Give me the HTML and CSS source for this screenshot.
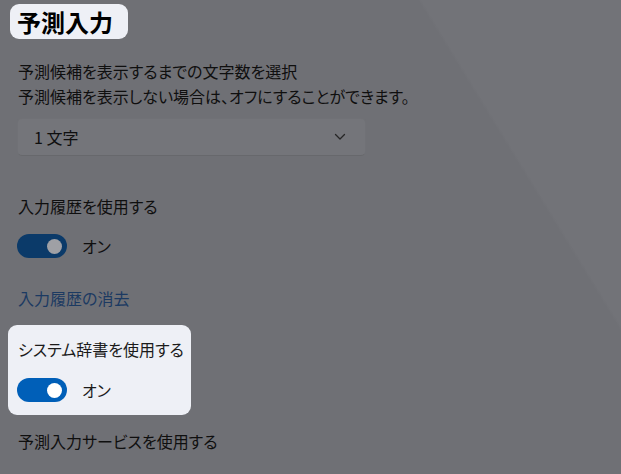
FILE: index.html
```html
<!DOCTYPE html>
<html lang="ja">
<head>
<meta charset="utf-8">
<title>予測入力</title>
<link rel="stylesheet" href="styles.css">
</head>
<body>
<main class="page">
  <h1 class="title">予測入力</h1>
  <p class="desc">予測候補を表示するまでの文字数を選択<br>予測候補を表示しない場合は、オフにすることができます。</p>
  <div class="select">
    <span class="select-text">1 文字</span>
    <svg class="chevron" width="12" height="8" viewBox="0 0 12 8"><polyline points="1.5,1.5 6,6 10.5,1.5" fill="none" stroke="#262626" stroke-width="1.3" stroke-linecap="round" stroke-linejoin="round"/></svg>
  </div>
  <p class="label label-history">入力履歴を使用する</p>
  <div class="toggle-row">
    <span class="toggle toggle-dim"><span class="knob"></span></span>
    <span class="state">オン</span>
  </div>
  <p class="link">入力履歴の消去</p>
  <section class="spot">
    <p class="label">システム辞書を使用する</p>
    <div class="toggle-row toggle-row-spot">
      <span class="toggle toggle-on"><span class="knob"></span></span>
      <span class="state">オン</span>
    </div>
  </section>
  <p class="label label-last">予測入力サービスを使用する</p>
</main>
</body>
</html>
```

FILE: styles.css
```css
html, body {
  margin: 0;
  padding: 0;
}
body {
  width: 621px;
  height: 474px;
  overflow: hidden;
  background: linear-gradient(58.5deg, #6f7075 0, #6f7075 604px, #727378 607px, #727378 100%);
  font-family: "Noto Sans CJK JP", "Noto Sans", sans-serif;
  font-feature-settings: "palt";
  color: #0f0f0f;
}
.page {
  padding: 4px 0 0 18px;
  display: flex;
  flex-direction: column;
  align-items: flex-start;
}
.title {
  margin: 0 0 0 -8px;
  padding: 0 15px 0 7px;
  height: 35px;
  line-height: 35px;
  font-size: 24px;
  font-weight: 700;
  color: #000;
  background: #eef0f6;
  border-radius: 9px;
}
.desc {
  margin: 20px 0 0;
  font-size: 16px;
  line-height: 25px;
}
.select {
  margin-top: 9px;
  margin-left: -1px;
  box-sizing: border-box;
  width: 349px;
  height: 38px;
  display: flex;
  align-items: center;
  justify-content: space-between;
  padding: 0 19px 0 16px;
  background: #74757a;
  border: 1px solid #707176;
  border-bottom-color: #67686c;
  border-radius: 5px;
}
.select-text {
  font-size: 16px;
  line-height: 24px;
}
.chevron {
  display: block;
}
.label {
  margin: 0;
  font-size: 16px;
  line-height: 24px;
}
.label-history {
  margin-top: 38px;
}
.toggle-row {
  margin-top: 16px;
  margin-left: -1px;
  height: 24px;
  display: flex;
  align-items: center;
  gap: 15px;
}
.toggle {
  box-sizing: border-box;
  width: 50px;
  height: 24px;
  border-radius: 12px;
  display: flex;
  align-items: center;
  justify-content: flex-end;
  padding-right: 5px;
}
.toggle-dim {
  background: #0b3a69;
}
.toggle-on {
  background: #005fb8;
}
.knob {
  width: 15px;
  height: 15px;
  border-radius: 50%;
}
.toggle-dim .knob {
  background: #9fa0a5;
}
.toggle-on .knob {
  background: #ffffff;
}
.state {
  font-size: 16px;
  line-height: 24px;
}
.link {
  margin: 28px 0 0;
  font-size: 16px;
  line-height: 24px;
  color: #1c3a62;
}
.spot {
  margin: 15px 0 0 -10px;
  padding: 12px 7px 13px 10px;
  background: #eef0f6;
  border-radius: 9px;
  color: #1b1b1b;
}
.toggle-row-spot {
  margin-top: 17px;
}
.label-last {
  margin-top: 14px;
}
```
